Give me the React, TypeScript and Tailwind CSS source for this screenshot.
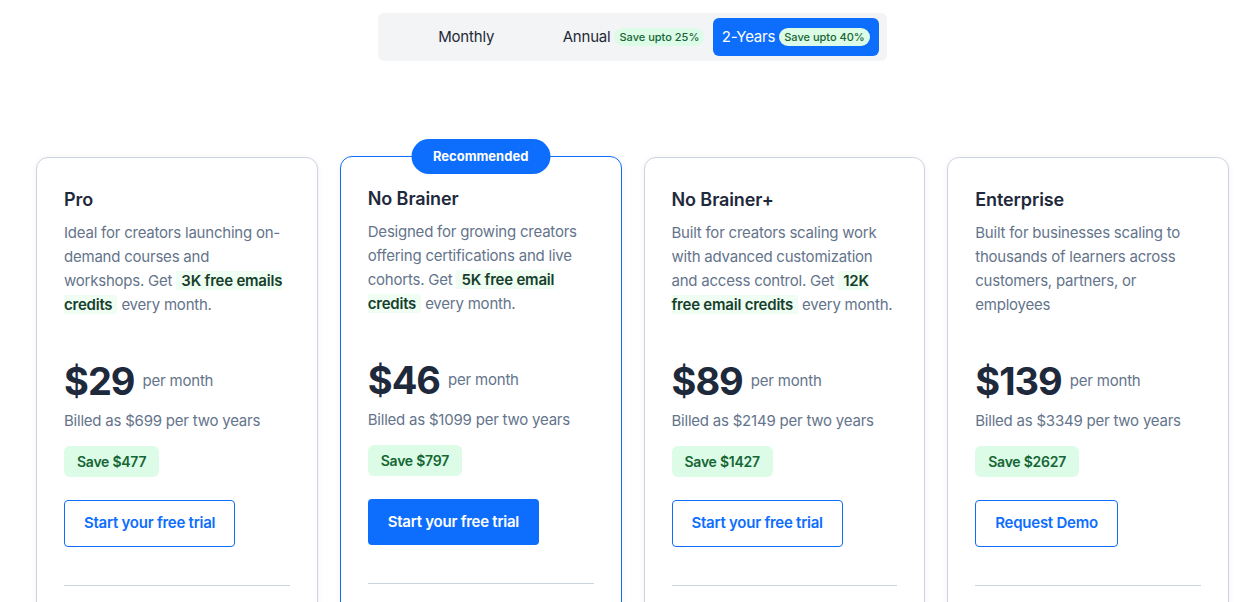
import { ReactNode } from 'react'

type Plan = {
  name: string
  description: ReactNode
  price: string
  billed: string
  save: string
  cta: string
  recommended?: boolean
}

function Hl({ children }: { children: ReactNode }) {
  return <span className="rounded-[2px] bg-[#effdf3] px-[5px] font-semibold text-[#163f2b]">{children}</span>
}

const plans: Plan[] = [
  {
    name: 'Pro',
    description: (
      <>
        Ideal for creators launching on-demand courses and workshops. Get <Hl>3K free emails credits</Hl> every month.
      </>
    ),
    price: '$29',
    billed: 'Billed as $699 per two years',
    save: 'Save $477',
    cta: 'Start your free trial',
  },
  {
    name: 'No Brainer',
    description: (
      <>
        Designed for growing creators offering certifications and live cohorts. Get <Hl>5K free email credits</Hl> every month.
      </>
    ),
    price: '$46',
    billed: 'Billed as $1099 per two years',
    save: 'Save $797',
    cta: 'Start your free trial',
    recommended: true,
  },
  {
    name: 'No Brainer+',
    description: (
      <>
        Built for creators scaling work with advanced customization and access control. Get <Hl>12K free email credits</Hl> every month.
      </>
    ),
    price: '$89',
    billed: 'Billed as $2149 per two years',
    save: 'Save $1427',
    cta: 'Start your free trial',
  },
  {
    name: 'Enterprise',
    description: <>Built for businesses scaling to thousands of learners across customers, partners, or employees</>,
    price: '$139',
    billed: 'Billed as $3349 per two years',
    save: 'Save $2627',
    cta: 'Request Demo',
  },
]

function Toggle() {
  return (
    <div className="mx-auto grid w-[509px] translate-x-[3px] grid-cols-3 rounded-[6px] bg-[#f3f4f6] p-[5px] tracking-[-0.2px]">
      <button className="flex h-[38px] items-center justify-center text-[15px] text-[#1f2937]">Monthly</button>
      <button className="flex h-[38px] items-center justify-center gap-[4px] pl-[2px] text-[15px] text-[#1f2937]">
        Annual
        <span className="rounded-full bg-[#dcfce7] px-[5px] py-[2px] text-[11px] font-medium leading-[14px] tracking-normal text-[#166534]">
          Save upto 25%
        </span>
      </button>
      <button className="flex h-[38px] -translate-x-[3px] items-center justify-center gap-[4px] rounded-[6px] bg-[#0d6efd] text-[15px] text-white">
        2-Years
        <span className="rounded-full bg-[#dcfce7] px-[5px] py-[2px] text-[11px] font-medium leading-[14px] tracking-normal text-[#166534]">
          Save upto 40%
        </span>
      </button>
    </div>
  )
}

function PlanCard({ plan }: { plan: Plan }) {
  return (
    <div
      className={
        plan.recommended
          ? 'relative -mt-px rounded-[12px] border border-[#0d6efd] bg-white p-[27px] pb-[120px] shadow-[0_1px_6px_rgba(15,23,42,0.06)]'
          : 'relative rounded-[12px] border border-[#cbd5e1] bg-white p-[27px] pb-[120px] shadow-[0_1px_6px_rgba(15,23,42,0.06)]'
      }
    >
      {plan.recommended && (
        <div className="absolute -top-[18px] left-1/2 flex h-[35px] w-[139px] -translate-x-1/2 items-center justify-center rounded-full bg-[#0d6efd] text-[13px] font-bold text-white">
          Recommended
        </div>
      )}
      <h3 className="mt-px text-[18px] font-semibold leading-[28px] tracking-[-0.1px] text-[#1e293b]">{plan.name}</h3>
      <p className="mt-[7px] h-[96px] text-[15px] leading-[24px] tracking-[-0.22px] text-[#64748b]">{plan.description}</p>
      <div className="mt-[44px] flex items-center gap-[8px]">
        <span className="text-[38px] font-bold leading-[40px] tracking-[-1px] text-[#1e293b]">{plan.price}</span>
        <span className="text-[15px] tracking-[-0.2px] text-[#64748b]">per month</span>
      </div>
      <p className="mt-2 text-[15px] leading-[24px] tracking-[-0.22px] text-[#64748b]">{plan.billed}</p>
      <div className="mt-[13px]">
        <span className="inline-flex h-[31px] items-center rounded-[6px] bg-[#dcfce7] px-[13px] text-[14px] font-semibold tracking-[-0.25px] text-[#166534]">
          {plan.save}
        </span>
      </div>
      <div className="mt-[23px]">
        {plan.recommended ? (
          <button className="h-[46px] rounded-[4px] bg-[#0d6efd] px-[20px] text-[15px] font-semibold tracking-[-0.25px] text-white">
            {plan.cta}
          </button>
        ) : (
          <button className="h-[47px] rounded-[4px] border border-[#0d6efd] bg-white px-[19px] text-[15px] font-semibold tracking-[-0.25px] text-[#0d6efd]">
            {plan.cta}
          </button>
        )}
      </div>
      <div className="mt-[38px] h-px bg-[#cbd5e1]" />
    </div>
  )
}

export default function App() {
  return (
    <div className="min-h-screen overflow-hidden bg-white pt-[13px] font-['Inter',sans-serif]">
      <Toggle />
      <div className="mt-[96px] grid grid-cols-4 gap-[22px] pl-[36px] pr-[30px]">
        {plans.map((p) => (
          <PlanCard key={p.name} plan={p} />
        ))}
      </div>
    </div>
  )
}
